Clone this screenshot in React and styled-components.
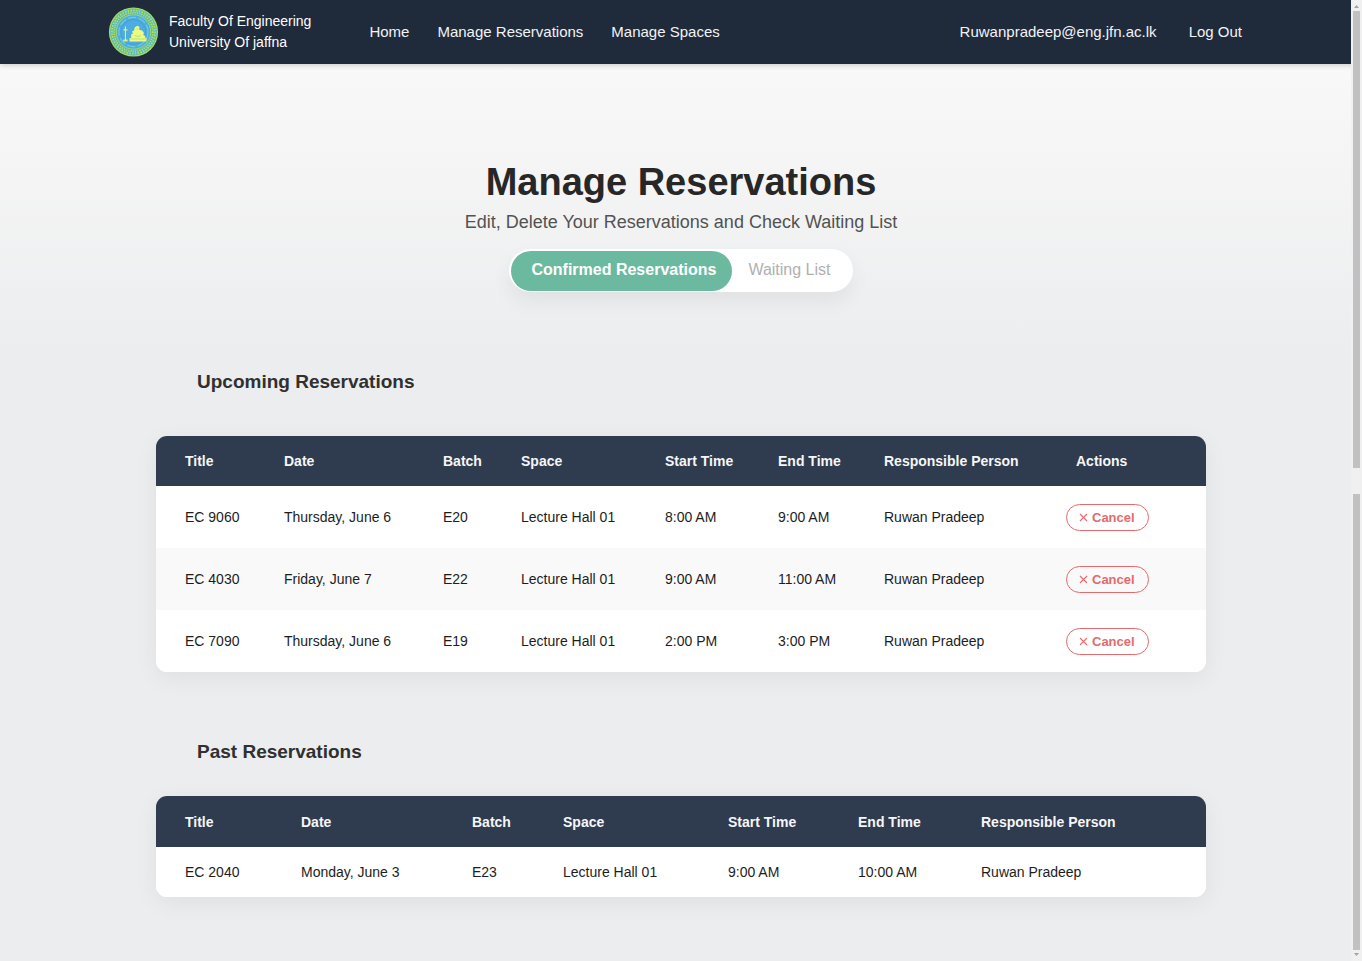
import React from "react";
import styled, { createGlobalStyle } from "styled-components";

const GlobalStyle = createGlobalStyle`
  *, *::before, *::after { box-sizing: border-box; }
  html, body { margin: 0; padding: 0; }
  body {
    font-family: "Liberation Sans", Arial, sans-serif;
    color: #212121;
    background: #ebedee;
  }
`;

const Page = styled.div`
  position: relative;
  min-height: 100vh;
  background: linear-gradient(to bottom, #fdfbfb 0, #ebedee 360px);
`;

const Header = styled.header`
  position: relative;
  display: flex;
  align-items: center;
  justify-content: space-between;
  height: 64px;
  padding: 0 108px;
  background: #1f2a3b;
  box-shadow: 0 1px 6px rgba(0, 0, 0, 0.2);
`;

const HeaderGroup = styled.div`
  display: flex;
  align-items: center;
  gap: 46px;
`;

const Brand = styled.a`
  display: flex;
  align-items: center;
  gap: 10px;
  color: #ffffff;
  font-size: 14px;
  line-height: 21px;
  text-decoration: none;
`;

const BrandText = styled.span`
  display: flex;
  flex-direction: column;
`;

const LogoSvg = styled.svg`
  display: block;
  width: 51px;
  height: 50px;
`;

const Nav = styled.nav`
  display: flex;
  gap: ${(p) => p.$gap};
`;

const NavLink = styled.a`
  padding: 8px 12px;
  color: #f1f3f5;
  font-size: 15px;
  line-height: 18px;
  text-decoration: none;
`;

const Main = styled.main`
  width: 100%;
  max-width: 1050px;
  margin: 0 auto;
  padding: 96px 0 64px;
`;

const Intro = styled.section`
  display: flex;
  flex-direction: column;
  align-items: center;
`;

const PageTitle = styled.h1`
  margin: 0;
  color: #272727;
  font-size: 38px;
  line-height: 44px;
`;

const Subtitle = styled.p`
  margin: 8px 0 16px;
  color: #525252;
  font-size: 18px;
  line-height: 21px;
`;

const TabBar = styled.div`
  display: flex;
  padding: 2px 2px 1px;
  background: #ffffff;
  border-radius: 22px;
  box-shadow: 0 10px 20px rgba(0, 0, 0, 0.06);
`;

const Tab = styled.button`
  height: 40px;
  padding: ${(p) => (p.$active ? "0 16px 2px 20px" : "0 20px 2px 16px")};
  border: 0;
  border-radius: 20px;
  background: ${(p) => (p.$active ? "#6bbaa0" : "transparent")};
  color: ${(p) => (p.$active ? "#ffffff" : "#b0b0b0")};
  font-family: inherit;
  font-size: 16px;
  font-weight: ${(p) => (p.$active ? 700 : 400)};
  cursor: pointer;
`;

const Section = styled.section`
  margin-top: ${(p) => p.$top};
`;

const SectionTitle = styled.h2`
  margin: 0 0 ${(p) => p.$gap};
  padding-left: 41px;
  color: #303030;
  font-size: 19px;
  line-height: 22px;
`;

const TableCard = styled.div`
  overflow: hidden;
  border-radius: 11px;
  background: #ffffff;
  box-shadow: 0 6px 24px rgba(0, 0, 0, 0.06);
`;

const Table = styled.table`
  width: 100%;
  table-layout: fixed;
  border-collapse: collapse;
  font-size: 14px;
`;

const Col = styled.col`
  width: ${(p) => p.$width};
`;

const HeadCell = styled.th`
  height: ${(p) => p.$height};
  padding: 0 0 0 ${(p) => (p.$inset ? "39px" : "29px")};
  background: #2f3b4e;
  color: #f5f6f7;
  text-align: left;
  white-space: nowrap;
`;

const Row = styled.tr`
  height: ${(p) => p.$height};
  background: #ffffff;

  &:nth-child(even) {
    background: #f9f9f9;
  }
`;

const Cell = styled.td`
  padding: 0 0 0 29px;
  color: #1d1d1d;
  white-space: nowrap;
`;

const CancelButton = styled.button`
  display: flex;
  align-items: center;
  gap: 4px;
  height: 27px;
  padding: 0 13px 0 12px;
  border: 1px solid #e46a6d;
  border-radius: 14px;
  background: transparent;
  color: #e46a6d;
  font-family: inherit;
  font-size: 13px;
  font-weight: 700;
  cursor: pointer;
`;

const ScrollRail = styled.div`
  position: absolute;
  top: 0;
  right: 0;
  bottom: 0;
  display: flex;
  flex-direction: column;
  align-items: center;
  width: 11px;
  padding: 4px 0;
  background: #f0f0f0;
`;

const ScrollThumb = styled.div`
  flex: 1;
  width: 7px;
  background: #c1c1c1;

  & + & {
    margin-top: 26px;
  }
`;

const ScrollArrow = styled.svg`
  display: block;
  width: 7px;
  height: 7px;
`;

function Logo() {
  return (
    <LogoSvg viewBox="0 0 51 50" aria-hidden="true">
      <circle cx="25.5" cy="25" r="24.6" fill="#a5dc63" />
      <circle cx="25.5" cy="25" r="23.4" fill="#5dbab4" />
      <circle cx="25.5" cy="25" r="21.6" fill="none" stroke="#b4e45f" strokeWidth="1.6" strokeDasharray="1.6 1.2" />
      <circle cx="25.5" cy="25" r="19.4" fill="none" stroke="#b4e45f" strokeWidth="1.6" strokeDasharray="1.2 1.1" />
      <circle cx="25.5" cy="25" r="17.2" fill="#4eade0" stroke="#9ad97a" strokeWidth="1" />
      <circle cx="25.5" cy="25" r="14.6" fill="none" stroke="#74cdd6" strokeWidth="1.1" strokeDasharray="8 2.5" />
      <circle cx="25.5" cy="25" r="12.4" fill="none" stroke="#3f9fdc" strokeWidth="1" />
      <path
        d="M16.9 19.500h1.100v2.700h1.500v1.200h-1.500v9.200h1.600v1.900h-4.400v-1.900h1.700v-9.200h-1.500v-1.200h1.500z"
        fill="#dcf46a"
      />
      <path
        d="M24 24.500l2-1 .8-3.200 2.600-1.600 2.200 1.400-.6 2.400 3 1 1.800 2-.4 2.800 1.800.6v2h1.300v3.600H21.500v-3.600h1.700v-3.400l1.800-1z"
        fill="#ecfa80"
      />
      <path d="M22.500 32h15M26.500 28.500l3.500 1 3-1M28.500 22h1.800" stroke="#9dd68b" strokeWidth="0.7" fill="none" />
    </LogoSvg>
  );
}

function CrossIcon() {
  return (
    <svg width="9" height="9" viewBox="0 0 9 9" aria-hidden="true">
      <path d="M1 1l7 7M8 1l-7 7" stroke="currentColor" strokeWidth="1.1" fill="none" />
    </svg>
  );
}

function ReservationTable({ label, widths, headHeight, rowHeight, rows, cancellable }) {
  const heads = ["Title", "Date", "Batch", "Space", "Start Time", "End Time", "Responsible Person"];
  return (
    <TableCard>
      <Table aria-label={label}>
        <colgroup>
          {widths.map((w, i) => (
            <Col key={i} $width={w} />
          ))}
        </colgroup>
        <thead>
          <tr>
            {heads.map((h) => (
              <HeadCell key={h} scope="col" $height={headHeight}>{h}</HeadCell>
            ))}
            {cancellable && <HeadCell scope="col" $height={headHeight} $inset>Actions</HeadCell>}
          </tr>
        </thead>
        <tbody>
          {rows.map((row) => (
            <Row key={row[0]} $height={rowHeight}>
              {row.map((value, i) => (
                <Cell key={i}>{value}</Cell>
              ))}
              {cancellable && (
                <Cell>
                  <CancelButton type="button">
                    <CrossIcon />
                    Cancel
                  </CancelButton>
                </Cell>
              )}
            </Row>
          ))}
        </tbody>
      </Table>
    </TableCard>
  );
}

const upcoming = [
  ["EC 9060", "Thursday, June 6", "E20", "Lecture Hall 01", "8:00 AM", "9:00 AM", "Ruwan Pradeep"],
  ["EC 4030", "Friday, June 7", "E22", "Lecture Hall 01", "9:00 AM", "11:00 AM", "Ruwan Pradeep"],
  ["EC 7090", "Thursday, June 6", "E19", "Lecture Hall 01", "2:00 PM", "3:00 PM", "Ruwan Pradeep"],
];

const past = [
  ["EC 2040", "Monday, June 3", "E23", "Lecture Hall 01", "9:00 AM", "10:00 AM", "Ruwan Pradeep"],
];

const upcomingWidths = ["99px", "159px", "78px", "144px", "113px", "106px", "182px", "169px"];
const pastWidths = ["116px", "171px", "91px", "165px", "130px", "123px", "254px"];

export default function App() {
  return (
    <Page>
      <GlobalStyle />
      <Header>
        <HeaderGroup>
          <Brand href="#home">
            <Logo />
            <BrandText>
              <span>Faculty Of Engineering</span>
              <span>University Of jaffna</span>
            </BrandText>
          </Brand>
          <Nav $gap="4px" aria-label="Main">
            <NavLink href="#home">Home</NavLink>
            <NavLink href="#reservations">Manage Reservations</NavLink>
            <NavLink href="#spaces">Manage Spaces</NavLink>
          </Nav>
        </HeaderGroup>
        <Nav $gap="8px" aria-label="Account">
          <NavLink href="#account">Ruwanpradeep@eng.jfn.ac.lk</NavLink>
          <NavLink href="#logout">Log Out</NavLink>
        </Nav>
      </Header>
      <Main>
        <Intro>
          <PageTitle>Manage Reservations</PageTitle>
          <Subtitle>Edit, Delete Your Reservations and Check Waiting List</Subtitle>
          <TabBar role="tablist">
            <Tab type="button" role="tab" aria-selected="true" $active>Confirmed Reservations</Tab>
            <Tab type="button" role="tab" aria-selected="false">Waiting List</Tab>
          </TabBar>
        </Intro>
        <Section $top="79px">
          <SectionTitle $gap="43px">Upcoming Reservations</SectionTitle>
          <ReservationTable
            label="Upcoming Reservations"
            widths={upcomingWidths}
            headHeight="50px"
            rowHeight="62px"
            rows={upcoming}
            cancellable
          />
        </Section>
        <Section $top="69px">
          <SectionTitle $gap="33px">Past Reservations</SectionTitle>
          <ReservationTable
            label="Past Reservations"
            widths={pastWidths}
            headHeight="51px"
            rowHeight="50px"
            rows={past}
          />
        </Section>
      </Main>
      <ScrollRail aria-hidden="true">
        <ScrollArrow viewBox="0 0 7 7">
          <path d="M1 4L3.500 1L6 4z" fill="#a3a3a3" />
        </ScrollArrow>
        <ScrollThumb />
        <ScrollThumb />
        <ScrollArrow viewBox="0 0 7 7">
          <path d="M1 3L3.500 6L6 3z" fill="#a3a3a3" />
        </ScrollArrow>
      </ScrollRail>
    </Page>
  );
}
